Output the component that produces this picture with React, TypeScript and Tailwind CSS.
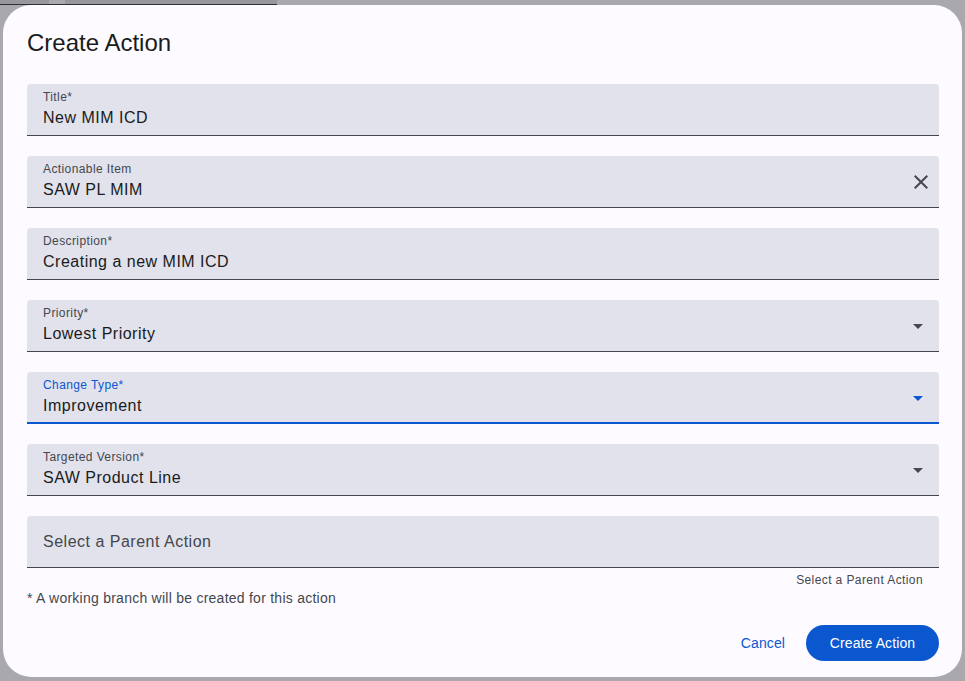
import React from "react";

const font = { fontFamily: '"Liberation Sans", Arial, sans-serif' };

function Field({
  label,
  value,
  focused,
  icon,
}: {
  label: string;
  value: string;
  focused?: boolean;
  icon?: "x" | "arrow";
}) {
  return (
    <div
      className={`relative h-[52px] rounded-t-[4px] bg-[#e1e2ec] pl-[16px] pr-[12px] ${
        focused ? "border-b-2 border-[#0b57d0]" : "border-b border-[#44474e]"
      }`}
    >
      <div
        className={`pt-[5px] text-[12px] leading-[16px] tracking-[0.4px] ${
          focused ? "text-[#0b57d0]" : "text-[#44474e]"
        }`}
      >
        {label}
      </div>
      <div className="mt-[1px] text-[16px] leading-[24px] text-[#1a1b20] tracking-[0.5px]">{value}</div>
      {icon === "x" && (
        <svg
          className="absolute right-[6px] top-[14px]"
          width="24"
          height="24"
          viewBox="0 0 24 24"
        >
          <path
            d="M19 6.41 17.59 5 12 10.59 6.41 5 5 6.41 10.59 12 5 17.59 6.41 19 12 13.41 17.59 19 19 17.59 13.41 12z"
            fill="#44474e"
          />
        </svg>
      )}
      {icon === "arrow" && (
        <svg
          className="absolute right-[9px] top-[14px]"
          width="24"
          height="24"
          viewBox="0 0 24 24"
        >
          <path d="M7 10l5 5 5-5z" fill={focused ? "#0b57d0" : "#44474e"} />
        </svg>
      )}
    </div>
  );
}

export default function App() {
  return (
    <div className="relative h-[681px] w-[965px] overflow-hidden bg-[#a9a8ac]" style={font}>
      <div className="absolute left-0 top-0 h-[5px] w-[277px] border-b border-[#2e2e33] bg-[#98979b]">
        <div className="ml-[49px] h-[4px] w-[16px] bg-[#aaa9ad]" />
      </div>
      <div className="absolute left-[3px] top-[5px] flex h-[672px] w-[959px] flex-col rounded-[28px] bg-[#fdfbff] pl-[24px] pr-[23px]">
        <div className="pt-[22px] text-[24px] leading-[32px] text-[#1a1b20]">Create Action</div>
        <div className="mt-[25px] flex flex-col gap-[20px]">
          <Field label="Title*" value="New MIM ICD" />
          <Field label="Actionable Item" value="SAW PL MIM" icon="x" />
          <Field label="Description*" value="Creating a new MIM ICD" />
          <Field label="Priority*" value="Lowest Priority" icon="arrow" />
          <Field label="Change Type*" value="Improvement" icon="arrow" focused />
          <Field label="Targeted Version*" value="SAW Product Line" icon="arrow" />
          <div className="flex h-[52px] items-center rounded-t-[4px] border-b border-[#44474e] bg-[#e1e2ec] pl-[16px] text-[16px] leading-[24px] text-[#44474e] tracking-[0.5px]">
            Select a Parent Action
          </div>
        </div>
        <div className="mt-[4px] pr-[16px] text-right text-[12px] leading-[16px] tracking-[0.4px] text-[#44474e]">
          Select a Parent Action
        </div>
        <div className="text-[14px] leading-[20px] tracking-[0.25px] text-[#44474e]">
          * A working branch will be created for this action
        </div>
        <div className="mt-[17px] flex justify-end gap-[9px]">
          <button className="h-[36px] rounded-full px-[12px] text-[14px] tracking-[0.1px] text-[#0b57d0]">Cancel</button>
          <button className="h-[36px] w-[133px] rounded-full bg-[#0b57d0] text-[14px] tracking-[0.1px] text-white">
            Create Action
          </button>
        </div>
      </div>
    </div>
  );
}
